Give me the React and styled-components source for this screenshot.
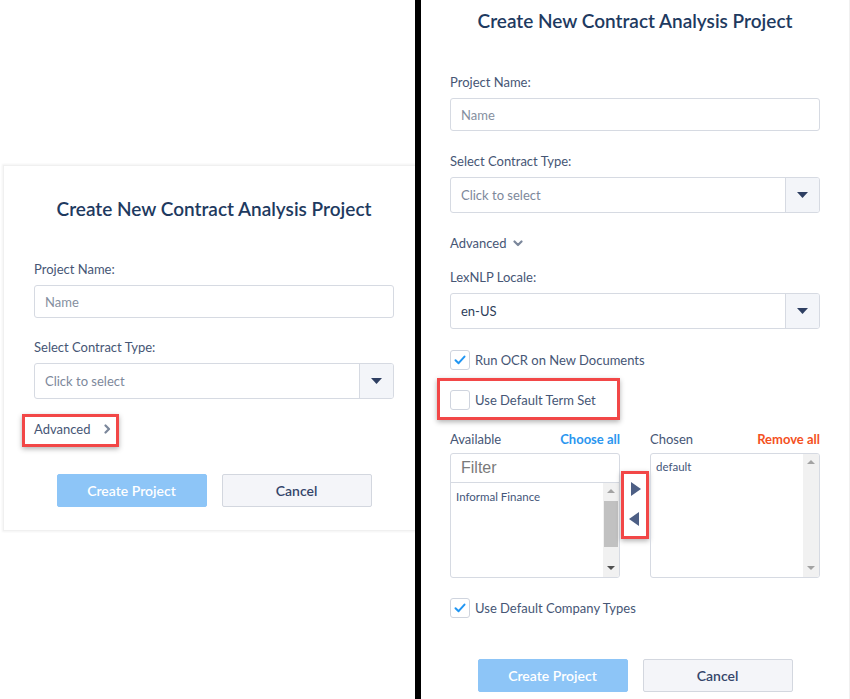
import React from 'react';
import styled, { createGlobalStyle } from 'styled-components';

const GlobalStyle = createGlobalStyle`
	html, body {
		margin: 0;
		padding: 0;
		background: #ffffff;
	}
	body {
		font-family: Lato, 'Noto Sans', sans-serif;
		color: #465675;
	}
	* {
		box-sizing: border-box;
	}
`;

const CheckIcon = () => (
	<svg width="14" height="14" viewBox="0 0 14 14">
		<path d="M2.5 7.2 L5.6 10.2 L11.5 3.6" fill="none" stroke="#2196f3" strokeWidth="2" strokeLinecap="round" strokeLinejoin="round" />
	</svg>
);

const Caret = () => (
	<svg width="11" height="6" viewBox="0 0 11 6">
		<path d="M0 0 H11 L5.5 6 Z" fill="#2e3f62" />
	</svg>
);

const ChevronRight = () => (
	<svg width="7" height="10" viewBox="0 0 7 10">
		<path d="M1.5 1.5 L5 5 L1.5 8.5" fill="none" stroke="#7b879b" strokeWidth="2.2" strokeLinecap="round" strokeLinejoin="round" />
	</svg>
);

const ChevronDown = () => (
	<svg width="10" height="7" viewBox="0 0 10 7">
		<path d="M1.5 1.5 L5 5 L8.5 1.5" fill="none" stroke="#7b879b" strokeWidth="2.2" strokeLinecap="round" strokeLinejoin="round" />
	</svg>
);

function Checkbox({ checked }) {
	return <Box>{checked && <CheckIcon />}</Box>;
}

function SelectField({ value, placeholder }) {
	return (
		<SelectBox>
			<SelectValue $placeholder={!value}>{value || placeholder}</SelectValue>
			<SelectButton>
				<Caret />
			</SelectButton>
		</SelectBox>
	);
}

function Scrollbar({ thumb }) {
	return (
		<Track>
			<ScrollArrow $up />
			{thumb ? <Thumb /> : <TrackFill />}
			<ScrollArrow $dark={thumb} />
		</Track>
	);
}

function ProjectForm({ expanded }) {
	return (
		<>
			<Title $expanded={expanded}>Create New Contract Analysis Project</Title>
			<Field>
				<Label>Project Name:</Label>
				<TextInput>Name</TextInput>
			</Field>
			<Field $gap={expanded ? 22 : 21}>
				<Label>Select Contract Type:</Label>
				<SelectField placeholder="Click to select" />
			</Field>
			{expanded ? (
				<>
					<AdvancedToggle $expanded>
						Advanced <ChevronDown />
					</AdvancedToggle>
					<Field $gap={18}>
						<Label>LexNLP Locale:</Label>
						<SelectField value="en-US" />
					</Field>
					<CheckRow $gap={21}>
						<Checkbox checked />
						Run OCR on New Documents
					</CheckRow>
					<CheckRow $gap={20}>
						<Highlight $t={-12} $r={-24} $b={-10} $l={-13}>
							<Checkbox />
							Use Default Term Set
						</Highlight>
					</CheckRow>
					<Transfer>
						<TransferHead>
							Available
							<HeadAction $color="#2a96ef">Choose all</HeadAction>
						</TransferHead>
						<span />
						<TransferHead>
							Chosen
							<HeadAction $color="#f4511e">Remove all</HeadAction>
						</TransferHead>
						<ListBox>
							<Filter>Filter</Filter>
							<ListBody>
								<ListItems>
									<ListItem>Informal Finance</ListItem>
								</ListItems>
								<Scrollbar thumb />
							</ListBody>
						</ListBox>
						<ArrowCol>
							<ArrowBox>
								<Triangle $dir="right" />
								<Triangle $dir="left" />
							</ArrowBox>
						</ArrowCol>
						<ListBox>
							<ListBody>
								<ListItems>
									<ListItem $top>default</ListItem>
								</ListItems>
								<Scrollbar />
							</ListBody>
						</ListBox>
					</Transfer>
					<CheckRow $gap={20}>
						<Checkbox checked />
						Use Default Company Types
					</CheckRow>
					<Actions $gap={41}>
						<PrimaryButton>Create Project</PrimaryButton>
						<SecondaryButton>Cancel</SecondaryButton>
					</Actions>
				</>
			) : (
				<>
					<AdvancedToggle>
						<Highlight $t={-7} $r={-8} $b={-10} $l={-12}>
							Advanced <ChevronRight />
						</Highlight>
					</AdvancedToggle>
					<Actions $gap={37}>
						<PrimaryButton>Create Project</PrimaryButton>
						<SecondaryButton>Cancel</SecondaryButton>
					</Actions>
				</>
			)}
		</>
	);
}

export default function App() {
	return (
		<Page>
			<GlobalStyle />
			<LeftPane>
				<Dialog>
					<ProjectForm />
				</Dialog>
			</LeftPane>
			<Divider />
			<RightPane>
				<FormColumn>
					<ProjectForm expanded />
				</FormColumn>
			</RightPane>
		</Page>
	);
}

const Page = styled.div`
	display: flex;
	width: 850px;
	height: 699px;
	overflow: hidden;
	background: #fff;
`;

const LeftPane = styled.div`
	width: 415px;
	flex-shrink: 0;
	overflow: hidden;
	padding-top: 165px;
`;

const Dialog = styled.div`
	width: 422px;
	margin-left: 3px;
	padding: 31px 30px 23px;
	background: #fff;
	box-shadow: 0 0 2px 1px rgba(0, 0, 0, 0.05);
	border: 1px solid #f0f0f0;
`;

const Divider = styled.div`
	width: 6px;
	flex-shrink: 0;
	background: #000;
`;

const RightPane = styled.div`
	flex: 1;
	display: flex;
	justify-content: center;
	padding-top: 9px;
	border-right: 1px solid #f0f0f0;
`;

const FormColumn = styled.div`
	width: 370px;
`;

const Title = styled.h2`
	margin: 0 0 ${(p) => (p.$expanded ? 41 : 40)}px;
	font-size: 19px;
	line-height: 24px;
	font-weight: 600;
	color: #1e3a5f;
	text-align: center;
	white-space: nowrap;
`;

const Field = styled.div`
	margin-top: ${(p) => (p.$gap === undefined ? 0 : p.$gap)}px;
`;

const Label = styled.div`
	font-size: 13px;
	line-height: 16px;
	margin-bottom: 8px;
	color: #465675;
`;

const TextInput = styled.div`
	height: 33px;
	border: 1px solid #d6dae2;
	border-radius: 3px;
	padding: 0 10px;
	display: flex;
	align-items: center;
	font-size: 13px;
	color: #858fa0;
`;

const SelectBox = styled.div`
	height: 36px;
	margin-top: 1px;
	border: 1px solid #d6dae2;
	border-radius: 3px;
	display: flex;
	overflow: hidden;
`;

const SelectValue = styled.div`
	flex: 1;
	display: flex;
	align-items: center;
	padding: 0 10px;
	font-size: 13px;
	color: ${(p) => (p.$placeholder ? '#7d889b' : '#2d3d5a')};
`;

const SelectButton = styled.div`
	width: 34px;
	display: flex;
	align-items: center;
	justify-content: center;
	background: #f3f5f9;
	border-left: 1px solid #d6dae2;
`;

const AdvancedToggle = styled.div`
	margin-top: 22px;
	display: flex;
	align-items: center;
	font-size: 13px;
	line-height: 16px;
	color: #465675;
	svg {
		margin-left: ${(p) => (p.$expanded ? 7 : 9)}px;
	}
`;

const Highlight = styled.span`
	position: relative;
	display: inline-flex;
	align-items: center;
	gap: 5px;
	&::after {
		content: '';
		position: absolute;
		top: ${(p) => p.$t}px;
		right: ${(p) => p.$r}px;
		bottom: ${(p) => p.$b}px;
		left: ${(p) => p.$l}px;
		border: 3px solid #f24747;
		box-shadow: 0 2px 5px rgba(0, 0, 0, 0.3);
		pointer-events: none;
	}
`;

const CheckRow = styled.div`
	margin-top: ${(p) => p.$gap}px;
	display: flex;
	align-items: center;
	gap: 5px;
	font-size: 13px;
	line-height: 20px;
	color: #465675;
`;

const Box = styled.span`
	width: 20px;
	height: 20px;
	border: 1px solid #cfd4de;
	border-radius: 3px;
	background: #fff;
	display: inline-flex;
	align-items: center;
	justify-content: center;
`;

const Transfer = styled.div`
	margin-top: 21px;
	display: grid;
	grid-template-columns: 170px 30px 170px;
	grid-template-rows: 16px 125px;
	row-gap: 6px;
`;

const TransferHead = styled.div`
	display: flex;
	justify-content: space-between;
	align-items: center;
	font-size: 13px;
	color: #465675;
`;

const HeadAction = styled.span`
	font-weight: 700;
	font-size: 13px;
	color: ${(p) => p.$color};
`;

const ListBox = styled.div`
	border: 1px solid #d6dae2;
	border-radius: 3px;
	display: flex;
	flex-direction: column;
	overflow: hidden;
`;

const Filter = styled.div`
	height: 29px;
	flex-shrink: 0;
	border-bottom: 1px solid #d6dae2;
	padding: 0 10px;
	display: flex;
	align-items: center;
	font-family: 'Liberation Sans', Arial, sans-serif;
	font-size: 16px;
	color: #7a7a7a;
`;

const ListBody = styled.div`
	flex: 1;
	display: flex;
	min-height: 0;
`;

const ListItems = styled.div`
	flex: 1;
	padding: 7px 5px;
`;

const ListItem = styled.div`
	font-size: 11.5px;
	line-height: 14px;
	color: #44567a;
	margin-top: ${(p) => (p.$top ? -1 : 0)}px;
`;

const Track = styled.div`
	width: 16px;
	background: #f1f1f1;
	display: flex;
	flex-direction: column;
	align-items: center;
`;

const ScrollArrow = styled.div`
	height: 16px;
	width: 16px;
	flex-shrink: 0;
	position: relative;
	&::before {
		content: '';
		position: absolute;
		left: 4px;
		top: ${(p) => (p.$up ? 6 : 5)}px;
		border-left: 4px solid transparent;
		border-right: 4px solid transparent;
		${(p) =>
			p.$up
				? 'border-bottom: 4px solid #a3a3a3;'
				: `border-top: 4px solid ${p.$dark ? '#505050' : '#a3a3a3'};`}
	}
`;

const Thumb = styled.div`
	width: 14px;
	height: 46px;
	margin-top: 2px;
	background: #c1c1c1;
	margin-bottom: auto;
`;

const TrackFill = styled.div`
	flex: 1;
`;

const ArrowCol = styled.div`
	padding: 18px 1px 0 1px;
`;

const ArrowBox = styled.div`
	height: 68px;
	border: 3px solid #f24747;
	box-shadow: 0 2px 5px rgba(0, 0, 0, 0.3);
	display: flex;
	flex-direction: column;
	align-items: center;
	padding-top: 8px;
	gap: 16px;
`;

const Triangle = styled.span`
	width: 0;
	height: 0;
	border-top: 7.5px solid transparent;
	border-bottom: 7.5px solid transparent;
	${(p) =>
		p.$dir === 'right'
			? 'border-left: 10px solid #4d5f85; margin-left: 2px;'
			: 'border-right: 10px solid #4d5f85; margin-left: -2px;'}
`;

const Actions = styled.div`
	margin-top: ${(p) => p.$gap}px;
	display: flex;
	justify-content: center;
	gap: 15px;
`;

const Button = styled.button`
	width: 150px;
	height: 33px;
	border-radius: 2px;
	font-family: Lato, 'Noto Sans', sans-serif;
	font-size: 14px;
	font-weight: 600;
	cursor: pointer;
`;

const PrimaryButton = styled(Button)`
	background: #8dc5f7;
	border: 1px solid #8dc5f7;
	color: #ffffff;
`;

const SecondaryButton = styled(Button)`
	background: #f4f5f9;
	border: 1px solid #d3d7df;
	color: #34456a;
`;
